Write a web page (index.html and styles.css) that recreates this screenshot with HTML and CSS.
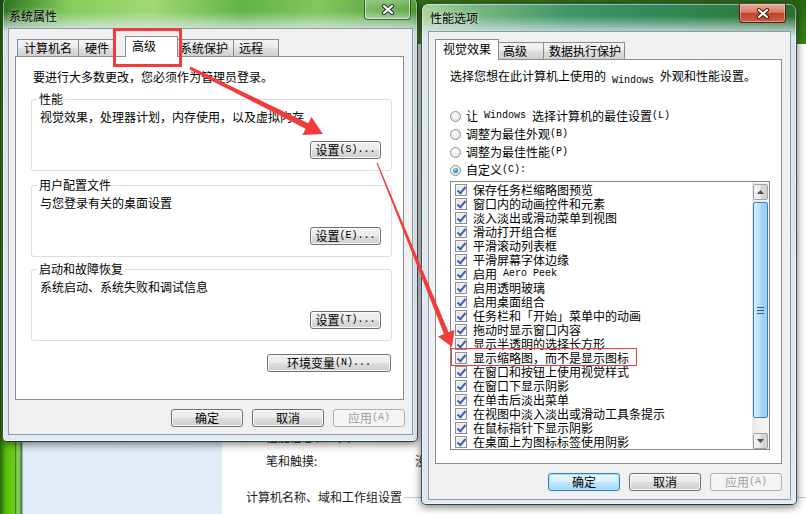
FILE: index.html
```html
<!DOCTYPE html>
<html lang="zh-CN">
<head>
    <meta charset="UTF-8">
    <meta name="viewport" content="width=device-width, initial-scale=1.0">
    <title>系统属性 - 性能选项</title>
    <link rel="stylesheet" href="styles.css">
</head>
<body>
    <div class="desktop">

        <div class="cpanel">
            <div class="cp-frame"></div>
            <div class="cp-nav"></div>
            <div class="cp-main">
                <div class="cp-row"><span class="cp-label">性能信息和工具:</span></div>
                <div class="cp-row"><span class="cp-label">笔和触摸:</span><span>没有可用于此显示器的笔或触控输入</span></div>
                <div class="cp-head"><span>计算机名称、域和工作组设置</span><i></i></div>
            </div>
        </div>

        <section class="window win-sys">
            <div class="titlebar">
                <span class="title">系统属性</span>
                <div class="close">
                    <svg width="14" height="11" viewBox="0 0 14 11"><path d="M3 2 L11 9 M11 2 L3 9" stroke="#2b3038" stroke-width="4.2" stroke-linecap="round"/><path d="M3 2 L11 9 M11 2 L3 9" stroke="#fff" stroke-width="2.2" stroke-linecap="round"/></svg>
                </div>
            </div>
            <div class="client">
                <div class="tabs">
                    <div class="tab">计算机名</div>
                    <div class="tab">硬件</div>
                    <div class="tab tab-on sys-adv">高级</div>
                    <div class="tab sys-prot">系统保护</div>
                    <div class="tab sys-remote">远程</div>
                </div>
                <div class="page page-sys">
                    <p class="intro">要进行大多数更改，您必须作为管理员登录。</p>

                    <div class="group">
                        <div class="legend">性能</div>
                        <p>视觉效果，处理器计划，内存使用，以及虚拟内存</p>
                        <div class="group-actions"><button class="btn">设置<span class="en">(S)...</span></button></div>
                    </div>

                    <div class="group g2">
                        <div class="legend">用户配置文件</div>
                        <p>与您登录有关的桌面设置</p>
                        <div class="group-actions"><button class="btn">设置<span class="en">(E)...</span></button></div>
                    </div>

                    <div class="group g3">
                        <div class="legend">启动和故障恢复</div>
                        <p>系统启动、系统失败和调试信息</p>
                        <div class="group-actions"><button class="btn">设置<span class="en">(T)...</span></button></div>
                    </div>

                    <div class="env-row"><button class="btn btn-wide">环境变量<span class="en">(N)...</span></button></div>
                </div>
                <div class="actions">
                    <button class="btn">确定</button>
                    <button class="btn">取消</button>
                    <button class="btn" disabled>应用<span class="en">(A)</span></button>
                </div>
            </div>
        </section>

        <section class="window win-perf">
            <div class="titlebar">
                <span class="title">性能选项</span>
                <div class="close close-red">
                    <svg width="14" height="11" viewBox="0 0 14 11"><path d="M3 2 L11 9 M11 2 L3 9" stroke="#4a1810" stroke-width="4.2" stroke-linecap="round"/><path d="M3 2 L11 9 M11 2 L3 9" stroke="#fff" stroke-width="2.2" stroke-linecap="round"/></svg>
                </div>
            </div>
            <div class="client">
                <div class="tabs">
                    <div class="tab tab-on perf-visual">视觉效果</div>
                    <div class="tab perf-adv">高级</div>
                    <div class="tab perf-dep">数据执行保护</div>
                </div>
                <div class="page page-perf">
                    <p class="intro">选择您想在此计算机上使用的<span class="en"> Windows </span>外观和性能设置。</p>

                    <div class="radios">
                        <label class="radio-row"><i class="radio"></i>让<span class="en"> Windows </span>选择计算机的最佳设置<span class="en">(L)</span></label>
                        <label class="radio-row"><i class="radio"></i>调整为最佳外观<span class="en">(B)</span></label>
                        <label class="radio-row"><i class="radio"></i>调整为最佳性能<span class="en">(P)</span></label>
                        <label class="radio-row"><i class="radio radio-on"></i>自定义<span class="en">(C):</span></label>
                    </div>

                    <div class="listbox">
                        <div class="items">
                            <div class="item"><i class="cb"></i>保存任务栏缩略图预览</div>
                            <div class="item"><i class="cb"></i>窗口内的动画控件和元素</div>
                            <div class="item"><i class="cb"></i>淡入淡出或滑动菜单到视图</div>
                            <div class="item"><i class="cb"></i>滑动打开组合框</div>
                            <div class="item"><i class="cb"></i>平滑滚动列表框</div>
                            <div class="item"><i class="cb"></i>平滑屏幕字体边缘</div>
                            <div class="item"><i class="cb"></i>启用<span class="en"> Aero Peek</span></div>
                            <div class="item"><i class="cb"></i>启用透明玻璃</div>
                            <div class="item"><i class="cb"></i>启用桌面组合</div>
                            <div class="item"><i class="cb"></i>任务栏和「开始」菜单中的动画</div>
                            <div class="item"><i class="cb"></i>拖动时显示窗口内容</div>
                            <div class="item"><i class="cb"></i>显示半透明的选择长方形</div>
                            <div class="item"><i class="cb"></i>显示缩略图，而不是显示图标</div>
                            <div class="item"><i class="cb"></i>在窗口和按钮上使用视觉样式</div>
                            <div class="item"><i class="cb"></i>在窗口下显示阴影</div>
                            <div class="item"><i class="cb"></i>在单击后淡出菜单</div>
                            <div class="item"><i class="cb"></i>在视图中淡入淡出或滑动工具条提示</div>
                            <div class="item"><i class="cb"></i>在鼠标指针下显示阴影</div>
                            <div class="item"><i class="cb"></i>在桌面上为图标标签使用阴影</div>
                        </div>
                        <div class="scrollbar">
                            <div class="sb-btn">
                                <svg width="7" height="4" viewBox="0 0 7 4"><path d="M0 4 L3.5 0 L7 4 Z" fill="#4d4d4d"/></svg>
                            </div>
                            <div class="sb-thumb"><span class="grip"></span></div>
                            <div class="sb-btn sb-down">
                                <svg width="7" height="4" viewBox="0 0 7 4"><path d="M0 0 L7 0 L3.5 4 Z" fill="#4d4d4d"/></svg>
                            </div>
                        </div>
                    </div>
                </div>
                <div class="actions">
                    <button class="btn btn-default">确定</button>
                    <button class="btn">取消</button>
                    <button class="btn" disabled>应用<span class="en">(A)</span></button>
                </div>
            </div>
        </section>

        <!-- red marks drawn over the screenshot -->
        <svg class="marks" width="806" height="514" viewBox="0 0 806 514">
            <rect x="114.5" y="29.5" width="66" height="36" fill="none" stroke="#f23b3b" stroke-width="3"/>
            <polygon fill="#f23b3b" points="190.4,66.6 308.2,123.3 311.4,117 323,134 302.5,135 305.6,128.7 189.6,69.4"/>
            <polygon fill="#f23b3b" points="377.6,162.8 448.6,332.2 454.6,329.7 452,347 437.9,336.5 444,334 376.6,163.2"/>
            <rect x="451.5" y="348.5" width="185" height="17" fill="none" stroke="#f23b3b" stroke-width="1"/>
        </svg>
    </div>
</body>
</html>
```

FILE: styles.css
```css
* {
    margin: 0;
    padding: 0;
    box-sizing: border-box;
}
body {
    width: 806px;
    height: 514px;
    overflow: hidden;
    font: 12px/14px "Noto Sans CJK SC", "Liberation Sans", sans-serif;
    color: #000;
    background: #3a8f26;
}
.desktop {
    position: relative;
    width: 806px;
    height: 514px;
    overflow: hidden;
    background:
        linear-gradient(180deg, rgba(20, 70, 10, .55) 0, rgba(20, 70, 10, 0) 60px),
        linear-gradient(90deg, #1f6a08 0, #58bb12 6px, #6ccb10 12px, #3d8f1a 100%);
}
.en {
    font-family: "Liberation Mono", monospace;
    font-size: 10px;
    line-height: 0;
    vertical-align: -2px;
    white-space: pre;
}

/* control panel window in the back */
.cpanel {
    position: absolute;
    left: 15px;
    top: 44px;
    right: 0;
    bottom: 0;
    display: flex;
    background: #fff;
}
.cp-frame {
    width: 7px;
    background: linear-gradient(90deg, #2e5e22 0, #8fd36a 2px, #6fbf45 5px, #3f6a38 7px);
}
.cp-nav {
    width: 200px;
    background: linear-gradient(160deg, #e4ecf8 0, #dfe9f6 40%, #e2ebf7 100%);
    border-left: 1px solid #9fb3c8;
}
.cp-main {
    flex: 1;
    display: flex;
    flex-direction: column;
    justify-content: flex-end;
    padding: 0 0 9px 24px;
    color: #1a1a1a;
}
.cp-row {
    display: flex;
    line-height: 16px;
    padding-left: 20px;
    margin-top: 8px;
}
.cp-label {
    width: 149px;
}
.cp-head {
    display: flex;
    align-items: center;
    margin-top: 20px;
    line-height: 16px;
}
.cp-head i {
    flex: 1;
    height: 1px;
    margin-left: 2px;
    background: #c8cdd3;
}

/* window frames */
.window {
    position: absolute;
    display: flex;
    flex-direction: column;
    border: 1px solid rgba(28, 38, 48, .8);
    border-radius: 7px 7px 5px 5px;
    box-shadow: inset 0 0 0 1px rgba(255, 255, 255, .45), 0 2px 9px rgba(0, 0, 0, .55);
}
.win-sys {
    left: 2px;
    top: -3px;
    width: 416px;
    height: 445px;
    padding: 0 4px 6px 5px;
    background:
        linear-gradient(180deg, rgba(224, 233, 241, 0) 0, rgba(224, 233, 241, 0) 14px, rgba(222, 232, 241, .95) 34px, #e1eaf3 100%),
        linear-gradient(90deg, #2c7420 0, #86cc5c 16%, #a0d874 36%, #62b444 58%, #82c65e 76%, #4f9f36 100%);
}
.win-perf {
    left: 421px;
    top: 3px;
    width: 376px;
    height: 502px;
    padding: 0 5px 4px 6px;
    z-index: 2;
    background:
        linear-gradient(180deg, rgba(224, 233, 241, 0) 0, rgba(224, 233, 241, 0) 12px, rgba(223, 233, 243, .95) 32px, #dfe9f4 100%),
        linear-gradient(90deg, #a9d49a 0, #78b884 14%, #3e9566 40%, #2f8a58 62%, #2f7d3e 85%, #2a6f2e 100%);
}
.titlebar {
    position: relative;
    display: flex;
    align-items: center;
}
.win-sys .titlebar {
    height: 30px;
    padding: 6px 0 0 1px;
}
.win-perf .titlebar {
    height: 27px;
    padding-left: 2px;
}
.title {
    text-shadow: 0 0 5px rgba(255, 255, 255, .8);
}
.close {
    position: absolute;
    top: 0;
    width: 47px;
    display: flex;
    align-items: center;
    justify-content: center;
    border: 1px solid rgba(40, 52, 60, .75);
    border-top: none;
    border-radius: 0 0 4px 4px;
}
.win-sys .close {
    right: 2px;
    height: 22px;
    padding-top: 2px;
    background: linear-gradient(180deg, rgba(255, 255, 255, .35), rgba(255, 255, 255, .12) 50%, rgba(255, 255, 255, .25));
    box-shadow: inset 0 0 0 1px rgba(255, 255, 255, .55);
}
.close-red {
    right: 5px;
    height: 19px;
    border-color: #5a1a10;
    background: linear-gradient(180deg, #e8a796 0, #d6806c 45%, #c1432b 52%, #cd5d40 100%);
    box-shadow: inset 0 0 0 1px rgba(255, 210, 200, .5);
}

/* client area */
.client {
    flex: 1;
    display: flex;
    flex-direction: column;
    background: #f0f0f0;
    border: 1px solid #8f9aa6;
    padding: 0 8px 0 6px;
}
.tabs {
    position: relative;
    z-index: 1;
    height: 27px;
    display: flex;
    align-items: flex-end;
}
.win-sys .tabs {
    padding-left: 2px;
}
.tab {
    height: 17px;
    padding: 0 6px;
    line-height: 16px;
    white-space: nowrap;
    border: 1px solid #898c95;
    border-bottom: none;
    margin-right: -1px;
    background: linear-gradient(180deg, #f3f3f3 0, #ebebeb 45%, #dddddd 55%, #d1d1d1 100%);
}
.tab-on {
    height: 21px;
    margin-bottom: -1px;
    background: #fff;
    line-height: 18px;
}
.sys-adv { width: 53px; margin-left: 10px; padding-left: 6px; }
.sys-prot { width: 57px; padding: 0 0 0 2px; }
.sys-remote { width: 46px; padding-left: 5px; }
.perf-visual { width: 64px; padding-left: 7px; }
.perf-adv { width: 46px; padding-left: 4px; }
.perf-dep { width: 82px; padding-left: 5px; }

.page {
    background: #fff;
    border: 1px solid #898c95;
}
.page-sys {
    height: 344px;
    padding: 13px 11px 0 15px;
}
.page-perf {
    height: 405px;
    padding: 9px 0 0 14px;
}
.page-sys .intro {
    padding-left: 2px;
}

/* group boxes */
.group {
    margin-top: 15px;
    border: 1px solid #d5dfe5;
    border-radius: 3px;
    padding: 0 0 11px 8px;
}
.group.g2 { margin-top: 14px; }
.group.g3 { margin-top: 12px; }
.legend {
    width: fit-content;
    margin: -8px 0 0 -3px;
    padding: 0 2px;
    background: #fff;
}
.group p {
    margin-top: 4px;
}
.group-actions {
    display: flex;
    justify-content: flex-end;
    padding-right: 10px;
    margin-top: 17px;
}
.env-row {
    display: flex;
    justify-content: flex-end;
    margin: 13px 1px 0 0;
}

/* buttons */
.btn {
    width: 72px;
    height: 18px;
    font: inherit;
    color: #000;
    border: 1px solid #707070;
    border-radius: 3px;
    background: linear-gradient(180deg, #f2f2f2 0, #ebebeb 48%, #dddddd 52%, #cfcfcf 100%);
    box-shadow: inset 0 0 0 1px rgba(252, 252, 252, .9);
    display: flex;
    align-items: center;
    justify-content: center;
}
.group .btn {
    width: 71px;
}
.btn-wide {
    width: 124px !important;
}
.btn:disabled {
    color: #a0a0a0;
    border-color: #adb2b5;
    background: #f4f4f4;
    box-shadow: none;
}
.btn-default {
    border-color: #3c7fb1;
    background: linear-gradient(180deg, #eaf6fd 0, #d9f0fc 48%, #bee6fd 52%, #a7d9f5 100%);
    box-shadow: inset 0 0 0 1px #9ee3f9;
}
.actions {
    display: flex;
    justify-content: flex-end;
    gap: 9px;
    margin-top: 9px;
}
.win-sys .actions {
    margin-right: -1px;
}

/* radio buttons */
.radios {
    margin-top: 24px;
}
.radio-row {
    height: 18px;
    display: flex;
    align-items: center;
    white-space: nowrap;
}
.radio {
    position: relative;
    width: 11px;
    height: 11px;
    margin-right: 5px;
    border: 1px solid #8e8f8f;
    border-radius: 50%;
    background: radial-gradient(circle at 40% 35%, #ffffff 0, #ececec 55%, #d2d2d2 100%);
}
.radio-on::after {
    content: "";
    position: absolute;
    left: 2px;
    top: 2px;
    width: 5px;
    height: 5px;
    border-radius: 50%;
    background: radial-gradient(circle at 40% 35%, #9fe0fb 0, #2a8ad4 55%, #0d4e8c 100%);
}

/* list with check boxes */
.listbox {
    width: 320px;
    height: 269px;
    margin-top: 2px;
    border: 1px solid #828790;
    display: flex;
}
.items {
    flex: 1;
    padding: 1px 0 0 4px;
}
.item {
    height: 14px;
    display: flex;
    align-items: center;
    white-space: nowrap;
}
.cb {
    position: relative;
    width: 12px;
    height: 12px;
    margin-right: 6px;
    border: 1px solid #8f8f8f;
    background: linear-gradient(135deg, #dedede 0, #f6f6f6 70%, #fdfdfd 100%);
    box-shadow: inset 0 0 0 1px #f4f4f4;
}
.cb::after {
    content: "";
    position: absolute;
    left: 3px;
    top: 0;
    width: 3px;
    height: 7px;
    border: solid #3f5fb4;
    border-width: 0 2px 2px 0;
    transform: rotate(40deg);
}
.scrollbar {
    width: 17px;
    display: flex;
    flex-direction: column;
    padding: 2px 1px 0;
    background: linear-gradient(90deg, #e6e6e6 0, #f1f1f1 40%, #f6f6f6 100%);
}
.sb-btn {
    height: 16px;
    display: flex;
    align-items: center;
    justify-content: center;
    border: 1px solid #a0a0a0;
    border-radius: 2px;
    background: linear-gradient(90deg, #f4f4f4 0, #e9e9e9 45%, #d9d9d9 55%, #cfcfcf 100%);
}
.sb-down {
    margin-top: auto;
}
.sb-thumb {
    height: 216px;
    margin-top: 2px;
    display: flex;
    align-items: center;
    justify-content: center;
    border: 1px solid #3c7fb1;
    border-radius: 2px;
    background: linear-gradient(90deg, #d4eefc 0, #b9e2fb 45%, #a5d6f4 55%, #97cdee 100%);
}
.grip {
    width: 7px;
    height: 7px;
    background: repeating-linear-gradient(180deg, #2e5f86 0, #2e5f86 1px, transparent 1px, transparent 3px);
}

/* annotation overlay */
.marks {
    position: absolute;
    left: 0;
    top: 0;
    z-index: 10;
    pointer-events: none;
}
```
